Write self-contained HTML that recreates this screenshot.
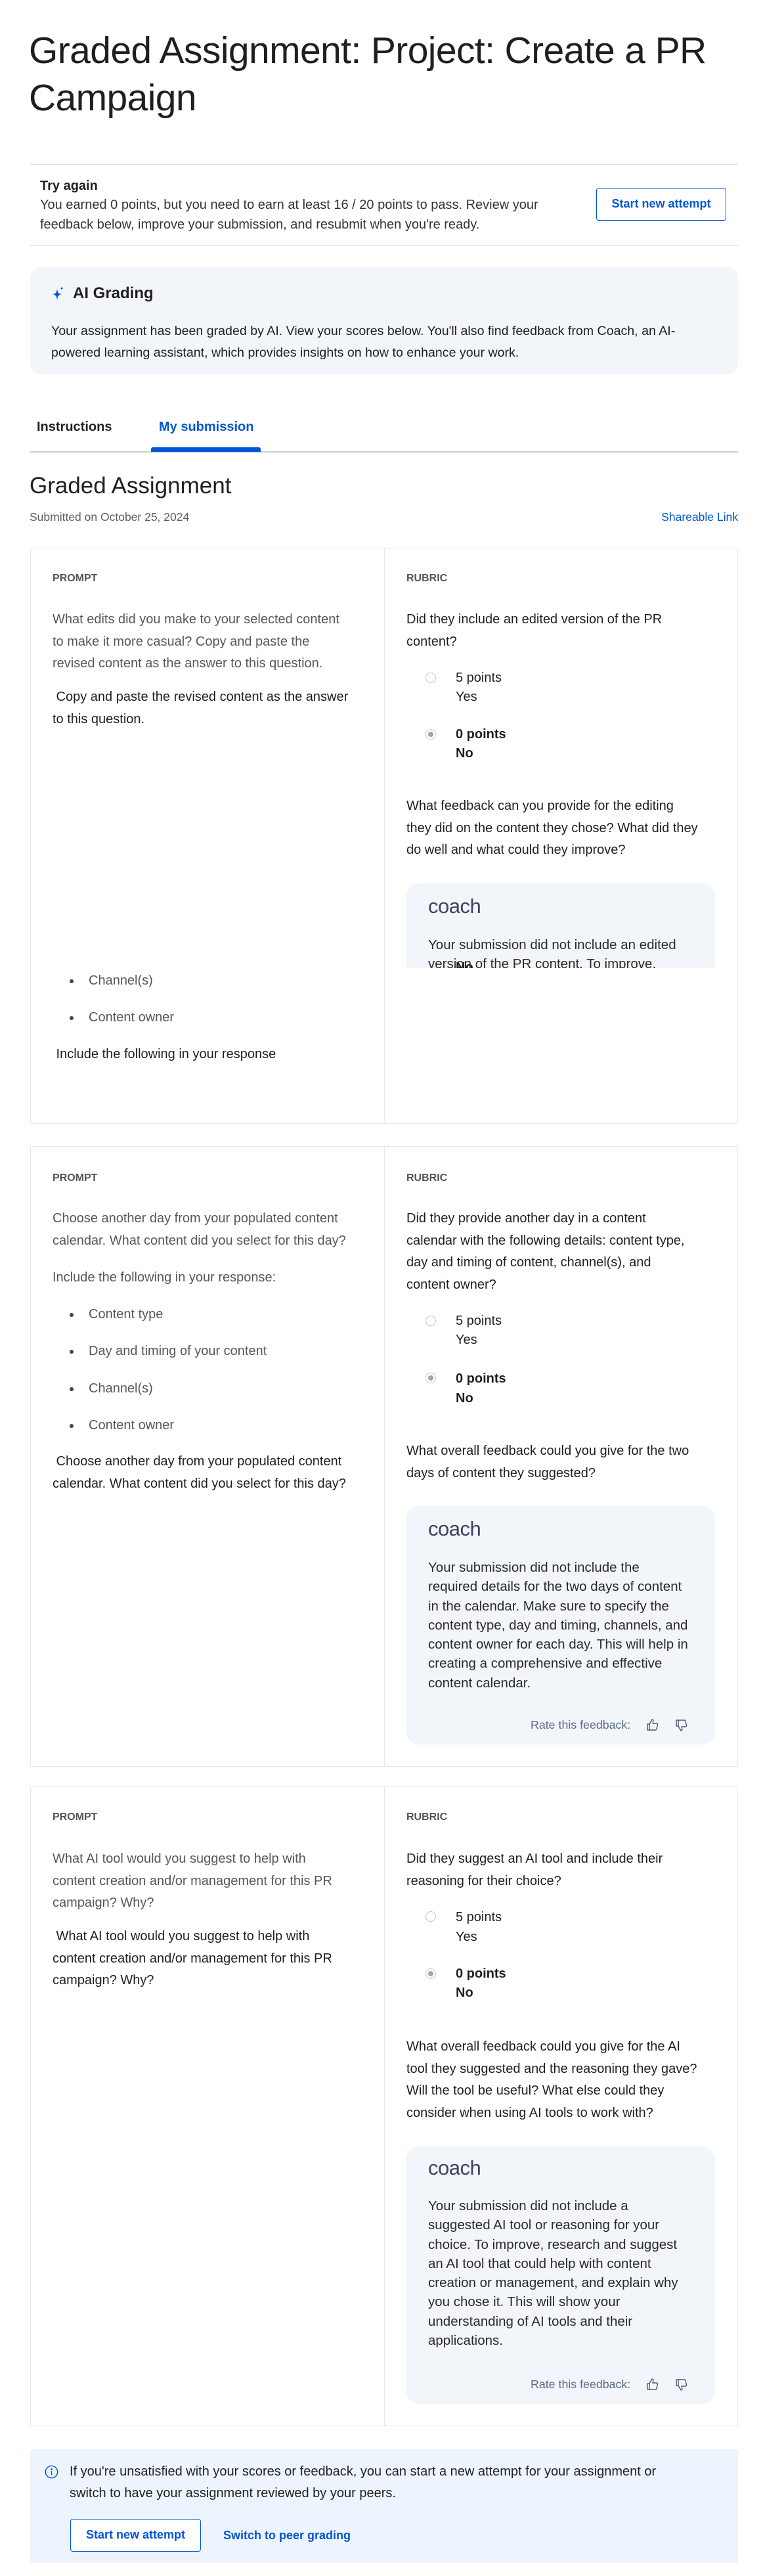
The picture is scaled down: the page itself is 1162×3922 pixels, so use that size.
<!DOCTYPE html>
<html><head><meta charset="utf-8">
<style>
*{margin:0;padding:0;box-sizing:border-box}
body{width:1162px;height:3922px;position:relative;background:#fff;font-family:"Liberation Sans",Arial,sans-serif;color:#1f1f1f;overflow:hidden}
.a{position:absolute;white-space:nowrap}
.hr{position:absolute;left:46px;width:1078px;height:1px;background:#e1e1e1}
.card{position:absolute;left:46px;width:1078px;border:1px solid #e6e8ec}
.div{position:absolute;left:538px;top:0;bottom:0;width:1px;background:#e6e8ec}
.lbl{font-size:16px;font-weight:bold;color:#555;line-height:20px}
.p{font-size:20px;line-height:33.5px}
.g{color:#575757}
.coach{position:absolute;left:618px;width:471px;background:#f2f5fa;border-radius:20px;overflow:hidden}
.logo{font-size:31px;color:#3b4360;line-height:36px;letter-spacing:-0.5px}
.ct{font-size:20.5px;line-height:29.3px;color:#2a2a2a}
.rate{font-size:17.8px;color:#5b6b85;line-height:20px}
.rad{position:absolute;width:16px;height:16px;border-radius:50%;border:1.5px solid #c4c4c4;background:#fff}
.rad.s{border:1.5px solid #c9c9cf;background:#fff}
.rad.s::after{content:"";position:absolute;left:2.5px;top:2.5px;width:8px;height:8px;border-radius:50%;background:#a3a3ad}
.dot{position:absolute;width:6px;height:6px;border-radius:50%;background:#444}
.blue{color:#0056d2}
.r{font-size:20px;line-height:29px}
</style></head><body>

<div class="a" style="left:44px;top:41px;font-size:57px;line-height:72px;letter-spacing:-0.6px;color:#1f1f1f">Graded Assignment: Project: Create a PR<br>Campaign</div>

<div class="hr" style="top:250px"></div>
<div class="a" style="left:61px;top:272px;font-size:20px;font-weight:bold;line-height:22px">Try again</div>
<div class="a" style="left:61px;top:297px;font-size:20px;line-height:30px;color:#333">You earned 0 points, but you need to earn at least 16 / 20 points to pass. Review your<br>feedback below, improve your submission, and resubmit when you're ready.</div>
<div class="a blue" style="left:908px;top:286px;width:198px;height:50px;border:1.5px solid #0056d2;border-radius:4px;font-size:18px;font-weight:bold;line-height:47px;text-align:center">Start new attempt</div>
<div class="hr" style="top:373px"></div>

<div style="position:absolute;left:46px;top:407px;width:1078px;height:163px;background:#f2f5fa;border-radius:16px"></div>
<svg class="a" style="left:78px;top:435px" width="22" height="24" viewBox="0 0 22 24"><path d="M9 5 C10 11 11 12 16 13 C11 14 10 15 9 22 C8 15 7 14 2 13 C7 12 8 11 9 5Z" fill="#0056d2"/><path d="M16 1 C16.4 3.2 16.8 3.6 19 4 C16.8 4.4 16.4 4.8 16 7 C15.6 4.8 15.2 4.4 13 4 C15.2 3.6 15.6 3.2 16 1Z" fill="#0056d2"/></svg>
<div class="a" style="left:111px;top:433px;font-size:24px;font-weight:bold;line-height:28px">AI Grading</div>
<div class="a" style="left:78px;top:488px;font-size:19.6px;line-height:33px;color:#1f1f1f">Your assignment has been graded by AI. View your scores below. You'll also find feedback from Coach, an AI-<br>powered learning assistant, which provides insights on how to enhance your work.</div>

<div class="a" style="left:56px;top:638px;font-size:20px;line-height:24px;font-weight:bold;color:#222">Instructions</div>
<div class="a blue" style="left:242px;top:638px;font-size:20px;line-height:24px;font-weight:bold">My submission</div>
<div style="position:absolute;left:46px;top:687px;width:1078px;height:2px;background:#c6cedb"></div>
<div style="position:absolute;left:230px;top:681px;width:167px;height:7px;background:#0056d2;border-radius:3px 3px 0 0"></div>

<div class="a" style="left:45px;top:720px;font-size:35px;line-height:40px;color:#1f1f1f">Graded Assignment</div>
<div class="a" style="left:45px;top:777px;font-size:17.5px;line-height:20px;color:#5e5e5e">Submitted on October 25, 2024</div>
<div class="a blue" style="right:38px;top:777px;font-size:17.5px;line-height:20px">Shareable Link</div>

<!-- CARD 1 -->
<div class="card" style="top:834px;height:877px"><div class="div"></div></div>
<div class="a lbl" style="left:80px;top:871px">PROMPT</div>
<div class="a lbl" style="left:619px;top:871px">RUBRIC</div>
<div class="a p g" style="left:80px;top:927px">What edits did you make to your selected content<br>to make it more casual? Copy and paste the<br>revised content as the answer to this question.</div>
<div class="a p" style="left:80px;top:1045px">&nbsp;Copy and paste the revised content as the answer<br>to this question.</div>
<div class="dot" style="left:106px;top:1491px"></div><div class="a p g" style="left:135px;top:1477px">Channel(s)</div>
<div class="dot" style="left:106px;top:1547px"></div><div class="a p g" style="left:135px;top:1533px">Content owner</div>
<div class="a p" style="left:80px;top:1589px">&nbsp;Include the following in your response</div>

<div class="a p" style="left:619px;top:927px">Did they include an edited version of the PR<br>content?</div>
<div class="rad" style="left:648px;top:1024px"></div>
<div class="a r" style="left:694px;top:1018px">5 points<br>Yes</div>
<div class="rad s" style="left:648px;top:1110px"></div>
<div class="a r" style="left:694px;top:1104px;font-weight:bold">0 points<br>No</div>
<div class="a p" style="left:619px;top:1211px">What feedback can you provide for the editing<br>they did on the content they chose? What did they<br>do well and what could they improve?</div>
<div class="coach" style="top:1345px;height:129px;border-radius:20px 20px 0 0">
<div class="a logo" style="left:34px;top:17px">coach</div>
<div class="a ct" style="left:34px;top:79px">Your submission did not include an edited<br>version of the PR content. To improve,</div>
<div class="a" style="left:76px;top:118px;font-size:20px;font-weight:bold;line-height:20px">No</div>
</div>

<!-- CARD 2 -->
<div class="card" style="top:1745px;height:945px"><div class="div"></div></div>
<div class="a lbl" style="left:80px;top:1784px">PROMPT</div>
<div class="a lbl" style="left:619px;top:1784px">RUBRIC</div>
<div class="a p g" style="left:80px;top:1839px">Choose another day from your populated content<br>calendar. What content did you select for this day?</div>
<div class="a p g" style="left:80px;top:1929px">Include the following in your response:</div>
<div class="dot" style="left:106px;top:1999px"></div><div class="a p g" style="left:135px;top:1985px">Content type</div>
<div class="dot" style="left:106px;top:2055px"></div><div class="a p g" style="left:135px;top:2041px">Day and timing of your content</div>
<div class="dot" style="left:106px;top:2112px"></div><div class="a p g" style="left:135px;top:2098px">Channel(s)</div>
<div class="dot" style="left:106px;top:2168px"></div><div class="a p g" style="left:135px;top:2154px">Content owner</div>
<div class="a p" style="left:80px;top:2209px">&nbsp;Choose another day from your populated content<br>calendar. What content did you select for this day?</div>

<div class="a p" style="left:619px;top:1839px">Did they provide another day in a content<br>calendar with the following details: content type,<br>day and timing of content, channel(s), and<br>content owner?</div>
<div class="rad" style="left:648px;top:2003px"></div>
<div class="a r" style="left:694px;top:1997px">5 points<br>Yes</div>
<div class="rad s" style="left:648px;top:2090px"></div>
<div class="a r" style="left:694px;top:2084px;line-height:30px;font-weight:bold">0 points<br>No</div>
<div class="a p" style="left:619px;top:2193px">What overall feedback could you give for the two<br>days of content they suggested?</div>
<div class="coach" style="top:2293px;height:363px">
<div class="a logo" style="left:34px;top:17px">coach</div>
<div class="a ct" style="left:34px;top:79px">Your submission did not include the<br>required details for the two days of content<br>in the calendar. Make sure to specify the<br>content type, day and timing, channels, and<br>content owner for each day. This will help in<br>creating a comprehensive and effective<br>content calendar.</div>
<div class="a rate" style="left:190px;top:323px">Rate this feedback:</div>
<svg class="a" style="left:366px;top:323px" width="20" height="20" viewBox="0 0 20 20" fill="none" stroke="#4a5672" stroke-width="1.4" stroke-linejoin="round"><path d="M2 9h3v9H2z M5 9l4-7c1.5 0 2 1 1.8 2.5L10 8h6c1 0 1.8 1 1.5 2l-1.6 6.5c-.3 1-1 1.5-2 1.5H5"/></svg>
<svg class="a" style="left:410px;top:324px" width="20" height="20" viewBox="0 0 20 20" fill="none" stroke="#4a5672" stroke-width="1.4" stroke-linejoin="round"><path d="M2 2h3v9H2z M5 11l4 7c1.5 0 2-1 1.8-2.5L10 12h6c1 0 1.8-1 1.5-2L15.9 3.5c-.3-1-1-1.5-2-1.5H5"/></svg>
</div>

<!-- CARD 3 -->
<div class="card" style="top:2720px;height:974px"><div class="div"></div></div>
<div class="a lbl" style="left:80px;top:2757px">PROMPT</div>
<div class="a lbl" style="left:619px;top:2757px">RUBRIC</div>
<div class="a p g" style="left:80px;top:2814px">What AI tool would you suggest to help with<br>content creation and/or management for this PR<br>campaign? Why?</div>
<div class="a p" style="left:80px;top:2932px">&nbsp;What AI tool would you suggest to help with<br>content creation and/or management for this PR<br>campaign? Why?</div>
<div class="a p" style="left:619px;top:2814px">Did they suggest an AI tool and include their<br>reasoning for their choice?</div>
<div class="rad" style="left:648px;top:2910px"></div>
<div class="a r" style="left:694px;top:2904px;line-height:30px">5 points<br>Yes</div>
<div class="rad s" style="left:648px;top:2997px"></div>
<div class="a r" style="left:694px;top:2991px;font-weight:bold">0 points<br>No</div>
<div class="a p" style="left:619px;top:3100px">What overall feedback could you give for the AI<br>tool they suggested and the reasoning they gave?<br>Will the tool be useful? What else could they<br>consider when using AI tools to work with?</div>
<div class="coach" style="top:3268px;height:392px">
<div class="a logo" style="left:34px;top:15px">coach</div>
<div class="a ct" style="left:34px;top:76px">Your submission did not include a<br>suggested AI tool or reasoning for your<br>choice. To improve, research and suggest<br>an AI tool that could help with content<br>creation or management, and explain why<br>you chose it. This will show your<br>understanding of AI tools and their<br>applications.</div>
<div class="a rate" style="left:190px;top:352px">Rate this feedback:</div>
<svg class="a" style="left:366px;top:352px" width="20" height="20" viewBox="0 0 20 20" fill="none" stroke="#4a5672" stroke-width="1.4" stroke-linejoin="round"><path d="M2 9h3v9H2z M5 9l4-7c1.5 0 2 1 1.8 2.5L10 8h6c1 0 1.8 1 1.5 2l-1.6 6.5c-.3 1-1 1.5-2 1.5H5"/></svg>
<svg class="a" style="left:410px;top:353px" width="20" height="20" viewBox="0 0 20 20" fill="none" stroke="#4a5672" stroke-width="1.4" stroke-linejoin="round"><path d="M2 2h3v9H2z M5 11l4 7c1.5 0 2-1 1.8-2.5L10 12h6c1 0 1.8-1 1.5-2L15.9 3.5c-.3-1-1-1.5-2-1.5H5"/></svg>
</div>

<!-- INFO -->
<div style="position:absolute;left:46px;top:3729px;width:1078px;height:173px;background:#eef4fd;border-radius:4px"></div>
<svg class="a" style="left:68px;top:3753px" width="21" height="21" viewBox="0 0 21 21" fill="none" stroke="#0056d2" stroke-width="1.4"><circle cx="10.5" cy="10.5" r="9.2"/><path d="M10.5 9v6.5"/><circle cx="10.5" cy="6.3" r="0.6" fill="#0056d2"/></svg>
<div class="a" style="left:106px;top:3747px;font-size:20px;line-height:33px">If you're unsatisfied with your scores or feedback, you can start a new attempt for your assignment or<br>switch to have your assignment reviewed by your peers.</div>
<div class="a blue" style="left:107px;top:3835px;width:199px;height:50px;border:1.5px solid #0056d2;border-radius:4px;background:#fff;font-size:18px;font-weight:bold;line-height:47px;text-align:center">Start new attempt</div>
<div class="a blue" style="left:340px;top:3849px;font-size:18px;font-weight:bold;line-height:22px">Switch to peer grading</div>

</body></html>
